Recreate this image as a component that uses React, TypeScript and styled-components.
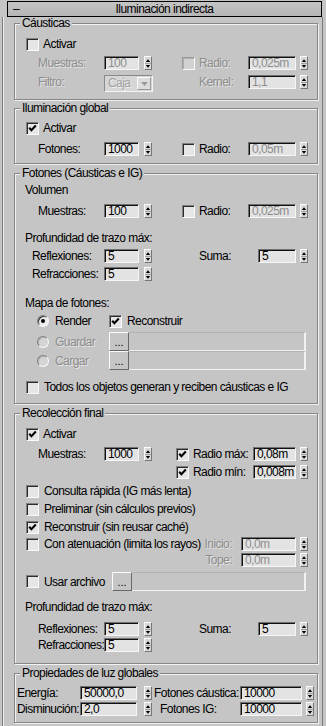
import React from 'react';
import styled, { createGlobalStyle } from 'styled-components';

const BG = '#c5c5c5';
const FONT = '"Liberation Sans", Arial, sans-serif';

const Global = createGlobalStyle`
  html, body { margin: 0; padding: 0; background: ${BG}; }
  body { font-family: ${FONT}; font-size: 12px; letter-spacing: -0.55px; color: #000; }
  * { box-sizing: border-box; }
`;

const Page = styled.div`
  width: 326px;
  height: 726px;
  overflow: hidden;
  padding-top: 1px;
  background: ${BG};
`;

const TitleBar = styled.div`
  margin: 0 4px 0 7px;
  height: 16px;
  border: 1px solid #000;
  background: linear-gradient(#c4c4c4, #b6b6b6);
  display: grid;
  grid-template-columns: 20px 1fr 20px;
  align-items: center;
  line-height: 14px;
`;

const Minus = styled.span`
  padding-left: 5px;
`;

const TitleText = styled.span`
  text-align: center;
`;

const Frame = styled.div`
  margin: 0 3px 0 2px;
  min-height: 709px;
  border-left: 1px solid #7c7c7c;
  border-right: 1px solid #7c7c7c;
  box-shadow: inset 1px 0 0 #ececec;
  overflow: hidden;
`;

const Group = styled.div<{ $mt: number; $pb: number }>`
  margin: ${(p) => p.$mt}px 4px 0 11px;
  border: 1px solid #868686;
  box-shadow: inset 1px 1px 0 #f2f2f2, 1px 1px 0 #f2f2f2;
  padding-bottom: ${(p) => p.$pb}px;
`;

const Legend = styled.div`
  margin: -8px 0 0 5px;
  width: fit-content;
  height: 14px;
  line-height: 14px;
  padding: 0 2px;
  background: ${BG};
  white-space: nowrap;
`;

const Row = styled.div<{ $mt: number; $h?: number; $pl?: number }>`
  display: flex;
  align-items: center;
  height: ${(p) => p.$h ?? 14}px;
  margin-top: ${(p) => p.$mt}px;
  padding-left: ${(p) => p.$pl ?? 0}px;
  white-space: nowrap;
`;

const Cell = styled.div<{ $w: number; $ml?: number; $pl?: number; $pr?: number; $right?: boolean }>`
  flex: none;
  width: ${(p) => p.$w}px;
  margin-left: ${(p) => p.$ml ?? 0}px;
  padding-left: ${(p) => p.$pl ?? 0}px;
  padding-right: ${(p) => p.$pr ?? 0}px;
  display: flex;
  align-items: center;
  justify-content: ${(p) => (p.$right ? 'flex-end' : 'flex-start')};
  height: 100%;
`;

const Text = styled.span<{ $dis?: boolean; $ml?: number; $auto?: boolean; $mr?: number }>`
  line-height: 14px;
  color: ${(p) => (p.$dis ? '#8d8d8d' : '#000')};
  text-shadow: ${(p) => (p.$dis ? '1px 1px 0 rgba(255,255,255,0.55)' : 'none')};
  margin-left: ${(p) => (p.$auto ? 'auto' : `${p.$ml ?? 0}px`)};
  margin-right: ${(p) => p.$mr ?? 0}px;
`;

const Input = styled.div<{ $w: number; $dis?: boolean }>`
  flex: none;
  width: ${(p) => p.$w}px;
  height: 14px;
  background: #e3e3e3;
  border-top: 1px solid #707070;
  border-left: 1px solid #707070;
  border-right: 1px solid #f6f6f6;
  border-bottom: 1px solid #f6f6f6;
  box-shadow: inset 1px 1px 0 #111;
  padding-left: 3px;
  line-height: 12px;
  color: ${(p) => (p.$dis ? '#8d8d8d' : '#000')};
  overflow: hidden;
  white-space: nowrap;
`;

const ArrowBox = styled.div<{ $gap: number }>`
  flex: none;
  width: 8px;
  height: 14px;
  margin-left: ${(p) => p.$gap}px;
  background: #d9d9d9;
  border-top: 1px solid #fafafa;
  border-left: 1px solid #fafafa;
  border-right: 1px solid #777;
  border-bottom: 1px solid #777;
  display: flex;
`;

const Arrows = ({ gap }: { gap: number }) => (
  <ArrowBox $gap={gap}>
    <svg width="6" height="12" viewBox="0 0 6 12">
      <polygon points="0.8,5 5.2,5 3,2.2" fill="#000" />
      <line x1="0" y1="6.5" x2="6" y2="6.5" stroke="#a0a0a0" strokeWidth="1" />
      <polygon points="0.8,8 5.2,8 3,10.8" fill="#000" />
    </svg>
  </ArrowBox>
);

const Box = styled.div<{ $dis?: boolean }>`
  flex: none;
  width: 13px;
  height: 13px;
  background: ${(p) => (p.$dis ? '#d2d2d2' : '#e6e6e6')};
  border-top: 1px solid ${(p) => (p.$dis ? '#9a9a9a' : '#808080')};
  border-left: 1px solid ${(p) => (p.$dis ? '#9a9a9a' : '#808080')};
  border-right: 1px solid #fafafa;
  border-bottom: 1px solid #fafafa;
  box-shadow: inset 1px 1px 0 ${(p) => (p.$dis ? '#b0b0b0' : '#2a2a2a')};
  display: flex;
  align-items: center;
  justify-content: center;
`;

const Check = ({ on, dis }: { on?: boolean; dis?: boolean }) => (
  <Box $dis={dis}>
    {on && (
      <svg width="11" height="11" viewBox="0 0 11 11">
        <path d="M2.2 4.8 L4.4 7.2 L8.8 2.6" fill="none" stroke="#000" strokeWidth="2.1" />
      </svg>
    )}
  </Box>
);

const RadioCircle = styled.div<{ $dis?: boolean }>`
  flex: none;
  width: 12px;
  height: 12px;
  border-radius: 50%;
  background: ${(p) => (p.$dis ? '#d4d4d4' : '#ececec')};
  border: 1px solid;
  border-color: #808080 #f8f8f8 #f8f8f8 #808080;
  box-shadow: inset 1px 1px 0 ${(p) => (p.$dis ? '#b4b4b4' : '#333')};
  display: flex;
  align-items: center;
  justify-content: center;
`;

const Dot = styled.div`
  width: 4px;
  height: 4px;
  border-radius: 50%;
  background: #000;
`;

const Radio = ({ on, dis }: { on?: boolean; dis?: boolean }) => (
  <RadioCircle $dis={dis}>{on && <Dot />}</RadioCircle>
);

const Select = styled.div`
  flex: none;
  align-self: flex-start;
  width: 49px;
  height: 17px;
  display: flex;
  background: #d6d6d6;
  border-top: 1px solid #8a8a8a;
  border-left: 1px solid #8a8a8a;
  border-right: 1px solid #f4f4f4;
  border-bottom: 1px solid #f4f4f4;
  line-height: 15px;
`;

const SelectText = styled.span`
  flex: 1;
  padding-left: 3px;
  color: #a0a0a0;
  text-shadow: 1px 1px 0 rgba(255,255,255,0.6);
`;

const SelectBtn = styled.div`
  flex: none;
  width: 14px;
  margin: 1px 1px 1px 0;
  background: #dcdcdc;
  border-top: 1px solid #fafafa;
  border-left: 1px solid #fafafa;
  border-right: 1px solid #9a9a9a;
  border-bottom: 1px solid #9a9a9a;
  display: flex;
  align-items: center;
  justify-content: center;
`;

const DotBtn = styled.div`
  flex: none;
  width: 20px;
  height: 19px;
  background: ${BG};
  border-top: 1px solid #fafafa;
  border-left: 1px solid #fafafa;
  border-right: 1px solid #6a6a6a;
  border-bottom: 1px solid #6a6a6a;
  display: flex;
  align-items: flex-end;
  justify-content: center;
  font-size: 11px;
  letter-spacing: 0;
  line-height: 12px;
  padding-bottom: 2px;
`;

const PathField = styled.div<{ $w: number }>`
  flex: none;
  width: ${(p) => p.$w}px;
  height: 19px;
  background: ${BG};
  border-top: 1px solid #b2b2b2;
  border-right: 2px solid #f2f2f2;
  border-bottom: 1px solid #f2f2f2;
`;

export default function App() {
  return (
    <Page>
      <Global />
      <TitleBar>
        <Minus>–</Minus>
        <TitleText>Iluminación indirecta</TitleText>
        <span />
      </TitleBar>
      <Frame>
        {/* Cáusticas */}
        <Group $mt={6} $pb={10}>
          <Legend>Cáusticas</Legend>
          <Row $mt={7} $pl={11}>
            <Check />
            <Text $ml={4}>Activar</Text>
          </Row>
          <Row $mt={5} $pl={23}>
            <Cell $w={66}><Text $dis>Muestras:</Text></Cell>
            <Input $w={35} $dis>100</Input>
            <Arrows gap={5} />
            <Cell $w={66} $ml={30}>
              <Check dis />
              <Text $dis $ml={4}>Radio:</Text>
            </Cell>
            <Input $w={48} $dis>0,025m</Input>
            <Arrows gap={4} />
          </Row>
          <Row $mt={5} $pl={23}>
            <Cell $w={66}><Text $dis>Filtro:</Text></Cell>
            <Select>
              <SelectText>Caja</SelectText>
              <SelectBtn>
                <svg width="7" height="4" viewBox="0 0 7 4">
                  <polygon points="0,0 7,0 3.5,4" fill="#9a9a9a" />
                </svg>
              </SelectBtn>
            </Select>
            <Cell $w={49} $ml={46}><Text $dis>Kernel:</Text></Cell>
            <Input $w={48} $dis>1,1</Input>
            <Arrows gap={4} />
          </Row>
        </Group>

        {/* Iluminación global */}
        <Group $mt={8} $pb={7}>
          <Legend>Iluminación global</Legend>
          <Row $mt={6} $pl={11}>
            <Check on />
            <Text $ml={4}>Activar</Text>
          </Row>
          <Row $mt={7} $pl={23}>
            <Cell $w={66}><Text>Fotones:</Text></Cell>
            <Input $w={35}>1000</Input>
            <Arrows gap={5} />
            <Cell $w={66} $ml={30}>
              <Check />
              <Text $ml={4}>Radio:</Text>
            </Cell>
            <Input $w={48} $dis>0,05m</Input>
            <Arrows gap={4} />
          </Row>
        </Group>

        {/* Fotones */}
        <Group $mt={9} $pb={9}>
          <Legend>Fotones (Cáusticas e IG)</Legend>
          <Row $mt={3} $pl={10}>
            <Text>Volumen</Text>
          </Row>
          <Row $mt={7} $pl={23}>
            <Cell $w={66}><Text>Muestras:</Text></Cell>
            <Input $w={35}>100</Input>
            <Arrows gap={5} />
            <Cell $w={66} $ml={30}>
              <Check />
              <Text $ml={4}>Radio:</Text>
            </Cell>
            <Input $w={48} $dis>0,025m</Input>
            <Arrows gap={4} />
          </Row>
          <Row $mt={13} $pl={10}>
            <Text>Profundidad de trazo máx:</Text>
          </Row>
          <Row $mt={4} $pl={17}>
            <Cell $w={72}><Text>Reflexiones:</Text></Cell>
            <Input $w={35}>5</Input>
            <Arrows gap={5} />
            <Cell $w={59} $ml={47}><Text>Suma:</Text></Cell>
            <Input $w={38}>5</Input>
            <Arrows gap={4} />
          </Row>
          <Row $mt={4} $pl={17}>
            <Cell $w={72}><Text>Refracciones:</Text></Cell>
            <Input $w={35}>5</Input>
            <Arrows gap={5} />
          </Row>
          <Row $mt={15} $pl={10}>
            <Text>Mapa de fotones:</Text>
          </Row>
          <Row $mt={4} $pl={22}>
            <Cell $w={72}>
              <Radio on />
              <Text $ml={6}>Render</Text>
            </Cell>
            <Check on />
            <Text $ml={5}>Reconstruir</Text>
          </Row>
          <Row $mt={4} $h={19} $pl={22}>
            <Cell $w={72}>
              <Radio dis />
              <Text $dis $ml={6}>Guardar</Text>
            </Cell>
            <DotBtn>...</DotBtn>
            <PathField $w={177} />
          </Row>
          <Row $mt={0} $h={19} $pl={22}>
            <Cell $w={72}>
              <Radio dis />
              <Text $dis $ml={6}>Cargar</Text>
            </Cell>
            <DotBtn>...</DotBtn>
            <PathField $w={177} />
          </Row>
          <Row $mt={10} $pl={11}>
            <Check />
            <Text $ml={5}>Todos los objetos generan y reciben cáusticas e IG</Text>
          </Row>
        </Group>

        {/* Recolección final */}
        <Group $mt={9} $pb={11}>
          <Legend>Recolección final</Legend>
          <Row $mt={7} $pl={11}>
            <Check on />
            <Text $ml={4}>Activar</Text>
          </Row>
          <Row $mt={6} $pl={23}>
            <Cell $w={66}><Text>Muestras:</Text></Cell>
            <Input $w={35}>1000</Input>
            <Arrows gap={5} />
            <Cell $w={77} $ml={24}>
              <Check on />
              <Text $ml={4}>Radio máx:</Text>
            </Cell>
            <Input $w={43}>0,08m</Input>
            <Arrows gap={4} />
          </Row>
          <Row $mt={4} $pl={161}>
            <Cell $w={77}>
              <Check on />
              <Text $ml={4}>Radio mín:</Text>
            </Cell>
            <Input $w={43}>0,008m</Input>
            <Arrows gap={4} />
          </Row>
          <Row $mt={5} $pl={11}>
            <Check />
            <Text $ml={5}>Consulta rápida (IG más lenta)</Text>
          </Row>
          <Row $mt={4} $pl={11}>
            <Check />
            <Text $ml={5}>Preliminar (sin cálculos previos)</Text>
          </Row>
          <Row $mt={4} $pl={11}>
            <Check on />
            <Text $ml={5}>Reconstruir (sin reusar caché)</Text>
          </Row>
          <Row $mt={3} $pl={11}>
            <Cell $w={215}>
              <Check />
              <Text $ml={5}>Con atenuación (limita los rayos)</Text>
              <Text $dis $auto $mr={9}>Inicio:</Text>
            </Cell>
            <Input $w={55} $dis>0,0m</Input>
            <Arrows gap={4} />
          </Row>
          <Row $mt={2}>
            <Cell $w={226} $right $pr={9}><Text $dis>Tope:</Text></Cell>
            <Input $w={55} $dis>0,0m</Input>
            <Arrows gap={4} />
          </Row>
          <Row $mt={5} $h={19} $pl={11}>
            <Cell $w={86}>
              <Check />
              <Text $ml={5}>Usar archivo</Text>
            </Cell>
            <DotBtn>...</DotBtn>
            <PathField $w={174} />
          </Row>
          <Row $mt={9} $pl={10}>
            <Text>Profundidad de trazo máx:</Text>
          </Row>
          <Row $mt={8} $pl={23}>
            <Cell $w={66}><Text>Reflexiones:</Text></Cell>
            <Input $w={35}>5</Input>
            <Arrows gap={5} />
            <Cell $w={59} $ml={47}><Text>Suma:</Text></Cell>
            <Input $w={38}>5</Input>
            <Arrows gap={4} />
          </Row>
          <Row $mt={2} $pl={23}>
            <Cell $w={66}><Text>Refracciones:</Text></Cell>
            <Input $w={35}>5</Input>
            <Arrows gap={5} />
          </Row>
        </Group>

        {/* Propiedades de luz globales */}
        <Group $mt={9} $pb={6}>
          <Legend>Propiedades de luz globales</Legend>
          <Row $mt={6} $pl={2}>
            <Cell $w={63}><Text>Energía:</Text></Cell>
            <Input $w={57}>50000,0</Input>
            <Arrows gap={7} />
            <Cell $w={86} $ml={2}><Text>Fotones cáustica:</Text></Cell>
            <Input $w={62}>10000</Input>
            <Arrows gap={4} />
          </Row>
          <Row $mt={2} $pl={2}>
            <Cell $w={63}><Text>Disminución:</Text></Cell>
            <Input $w={57}>2,0</Input>
            <Arrows gap={7} />
            <Cell $w={86} $ml={2} $pl={6}><Text>Fotones IG:</Text></Cell>
            <Input $w={62}>10000</Input>
            <Arrows gap={4} />
          </Row>
        </Group>
      </Frame>
    </Page>
  );
}
